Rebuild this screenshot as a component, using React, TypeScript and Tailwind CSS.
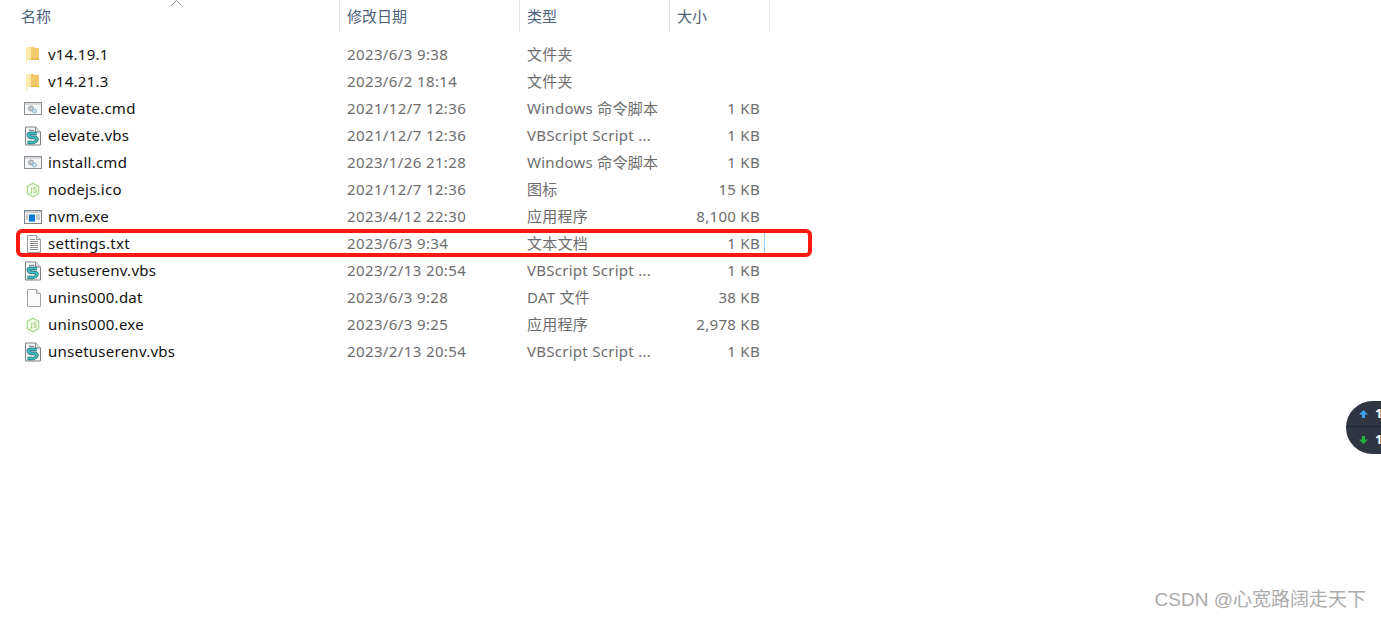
const font = "[font-family:'Noto_Sans','Noto_Sans_CJK_SC',sans-serif]";

function FolderIcon() {
  return (
    <svg className="ml-[2px]" width="13" height="18" viewBox="0 0 13 18">
      <path d="M3 1h5l1 1h4v12H3z" fill="#f2ca6b" />
      <path d="M5 12.500h8V14H3z" fill="#e8b94f" />
      <path d="M0 1.500L5 1v12.500l-3.500.5L1 17.500 0 17z" fill="#fdeaa8" />
    </svg>
  );
}

function CmdIcon() {
  return (
    <svg width="18" height="18" viewBox="0 0 18 18">
      <rect x=".5" y="2.500" width="17" height="12" fill="#f4f5f6" stroke="#8c9094" />
      <rect x="1" y="3" width="16" height="2" fill="#d5d8da" />
      <circle cx="7" cy="8.500" r="2.500" fill="#c3c8cc" stroke="#8f979d" strokeWidth=".8" />
      <circle cx="10.500" cy="11" r="2" fill="#d4e8f4" stroke="#79a9c6" strokeWidth=".8" />
    </svg>
  );
}

function VbsIcon() {
  return (
    <svg width="18" height="20" viewBox="0 0 18 20">
      <path d="M1.500 1h10l5 5v13h-15z" fill="#f7f8f8" stroke="#7d8184" />
      <path d="M11.500 1v5h5" fill="#dfe2e3" stroke="#7d8184" />
      <path d="M13 7.500H6.500Q3.500 7.500 4.500 9.500T8 11.500H11Q14 12 12.500 14.500T8 16.500H3.500" fill="none" stroke="#2f5f66" strokeWidth="3.400" />
      <path d="M13 7.500H6.500Q3.500 7.500 4.500 9.500T8 11.500H11Q14 12 12.500 14.500T8 16.500H3.500" fill="none" stroke="#3cc0c4" strokeWidth="2" />
      <path d="M5 4.500h5" stroke="#6d8f94" strokeWidth="1.500" />
    </svg>
  );
}

function NodeIcon() {
  return (
    <svg className="ml-[2px]" width="14" height="16" viewBox="0 0 16 18">
      <path d="M8 1.200l6.500 3.700v8.200L8 16.800l-6.500-3.700V4.900z" fill="#f5fbef" stroke="#a8d98a" strokeWidth="1.400" />
      <path d="M6.500 6v5.500q0 1.500-2 1" fill="none" stroke="#9ed27c" strokeWidth="1.200" />
      <path d="M12 6.800Q10 5.500 8.900 6.800 8.400 8.200 10 8.800t2 1.600q-.6 2-3.500 1" fill="none" stroke="#9ed27c" strokeWidth="1.200" />
    </svg>
  );
}

function ExeIcon() {
  return (
    <svg width="18" height="16" viewBox="0 0 18 16">
      <rect x=".5" y="1.500" width="17" height="13" fill="#f6f7f8" stroke="#7f8488" />
      <rect x="1" y="2" width="16" height="2" fill="#c8ccd0" />
      <rect x="5" y="5.500" width="6" height="7" fill="#0a78d7" />
      <path d="M2 6h2M2 8h2M2 10h2M12 6h4M12 8h4M12 10h4" stroke="#9da3a8" />
    </svg>
  );
}

function TxtIcon() {
  return (
    <svg className="ml-[2px]" width="16" height="18" viewBox="0 0 16 18">
      <path d="M1.500.5h9l4 4v13h-13z" fill="#fafafa" stroke="#9a9d9f" />
      <path d="M10.500.5v4h4" fill="#e8e9ea" stroke="#9a9d9f" />
      <path d="M4 4.500h5M4 6.500h8M4 8.500h8M4 10.500h8M4 12.500h8M4 14.500h8" stroke="#8d9092" />
    </svg>
  );
}

function BlankIcon() {
  return (
    <svg className="ml-[2px]" width="16" height="18" viewBox="0 0 16 18">
      <path d="M1.500.5h9l4 4v13h-13z" fill="#fbfbfb" stroke="#a2a5a7" />
      <path d="M10.500.5v4h4" fill="#eceded" stroke="#a2a5a7" />
    </svg>
  );
}

const files = [
  { icon: <FolderIcon />, name: "v14.19.1", date: "2023/6/3 9:38", type: "文件夹", size: "" },
  { icon: <FolderIcon />, name: "v14.21.3", date: "2023/6/2 18:14", type: "文件夹", size: "" },
  { icon: <CmdIcon />, name: "elevate.cmd", date: "2021/12/7 12:36", type: "Windows 命令脚本", size: "1 KB" },
  { icon: <VbsIcon />, name: "elevate.vbs", date: "2021/12/7 12:36", type: "VBScript Script ...", size: "1 KB" },
  { icon: <CmdIcon />, name: "install.cmd", date: "2023/1/26 21:28", type: "Windows 命令脚本", size: "1 KB" },
  { icon: <NodeIcon />, name: "nodejs.ico", date: "2021/12/7 12:36", type: "图标", size: "15 KB" },
  { icon: <ExeIcon />, name: "nvm.exe", date: "2023/4/12 22:30", type: "应用程序", size: "8,100 KB" },
  { icon: <TxtIcon />, name: "settings.txt", date: "2023/6/3 9:34", type: "文本文档", size: "1 KB" },
  { icon: <VbsIcon />, name: "setuserenv.vbs", date: "2023/2/13 20:54", type: "VBScript Script ...", size: "1 KB" },
  { icon: <BlankIcon />, name: "unins000.dat", date: "2023/6/3 9:28", type: "DAT 文件", size: "38 KB" },
  { icon: <NodeIcon />, name: "unins000.exe", date: "2023/6/3 9:25", type: "应用程序", size: "2,978 KB" },
  { icon: <VbsIcon />, name: "unsetuserenv.vbs", date: "2023/2/13 20:54", type: "VBScript Script ...", size: "1 KB" },
];

export default function App() {
  return (
    <div className={`relative w-[1381px] h-[618px] overflow-hidden bg-white ${font}`}>
      {/* header */}
      <div className="relative flex h-[32px] w-[770px] text-[15px] text-[#4c607a]">
        <svg className="absolute left-[171px] top-0" width="11" height="6" viewBox="0 0 11 6">
          <path d="M.5 5.500l5-5 5 5" fill="none" stroke="#8a8f94" />
        </svg>
        <div className="w-[340px] pl-[21px] pt-[5px] border-r border-[#e5e5e5]">名称</div>
        <div className="w-[180px] pl-[7px] pt-[5px] border-r border-[#e5e5e5]">修改日期</div>
        <div className="w-[150px] pl-[7px] pt-[5px] border-r border-[#e5e5e5]">类型</div>
        <div className="w-[100px] pl-[7px] pt-[5px] border-r border-[#e5e5e5]">大小</div>
      </div>

      {/* rows */}
      <div className="mt-[9px] flex flex-col w-[770px]">
        {files.map((f) => (
          <div key={f.name} className="flex h-[27px] items-center text-[15px] leading-[27px]">
            <div className="flex w-[340px] items-center">
              <div className="flex w-[48px] justify-start pl-[24px]">{f.icon}</div>
              <span className="text-[#111111] tracking-[0.25px]">{f.name}</span>
            </div>
            <div className="w-[180px] pl-[7px] text-[#6d6d6d] tracking-[0.38px]">{f.date}</div>
            <div className="w-[150px] pl-[7px] text-[#6d6d6d] tracking-[0.27px] whitespace-nowrap">{f.type}</div>
            <div className="w-[90px] text-right text-[#6d6d6d] tracking-[0.3px]">{f.size}</div>
          </div>
        ))}
      </div>

      {/* red highlight drawn over the settings.txt row */}
      <div className="absolute left-[16px] top-[229px] h-[28px] w-[796px] rounded-[6px] border-[4px] border-[#fb1a12]" />
      <div className="absolute left-[764px] top-[233px] h-[20px] w-px bg-[#99d1ff]" />

      {/* floating speed widget */}
      <div className="absolute left-[1346px] top-[401px] h-[53px] w-[60px] rounded-l-[27px] bg-[#2f3642] flex flex-col">
        <div className="flex h-[26px] items-center pl-[12px] gap-[6px] border-b border-[#232832]">
          <svg width="11" height="10" viewBox="0 0 11 10"><path d="M5.500 1L10 5.500H7V9H4V5.500H1z" fill="#3ba4f0" /></svg>
          <span className="text-[13px] font-bold text-white">1</span>
        </div>
        <div className="flex h-[26px] items-center pl-[12px] gap-[6px]">
          <svg width="11" height="10" viewBox="0 0 11 10"><path d="M5.500 9L10 4.500H7V1H4v3.500H1z" fill="#22b33a" /></svg>
          <span className="text-[13px] font-bold text-white">1</span>
        </div>
      </div>

      {/* watermark */}
      <div className="absolute right-[15px] top-[586px] text-[19px] leading-[27px] text-[#ababab] whitespace-nowrap [font-family:'Liberation_Sans','Noto_Sans_CJK_SC',sans-serif]">
        CSDN @心宽路阔走天下
      </div>
    </div>
  );
}
